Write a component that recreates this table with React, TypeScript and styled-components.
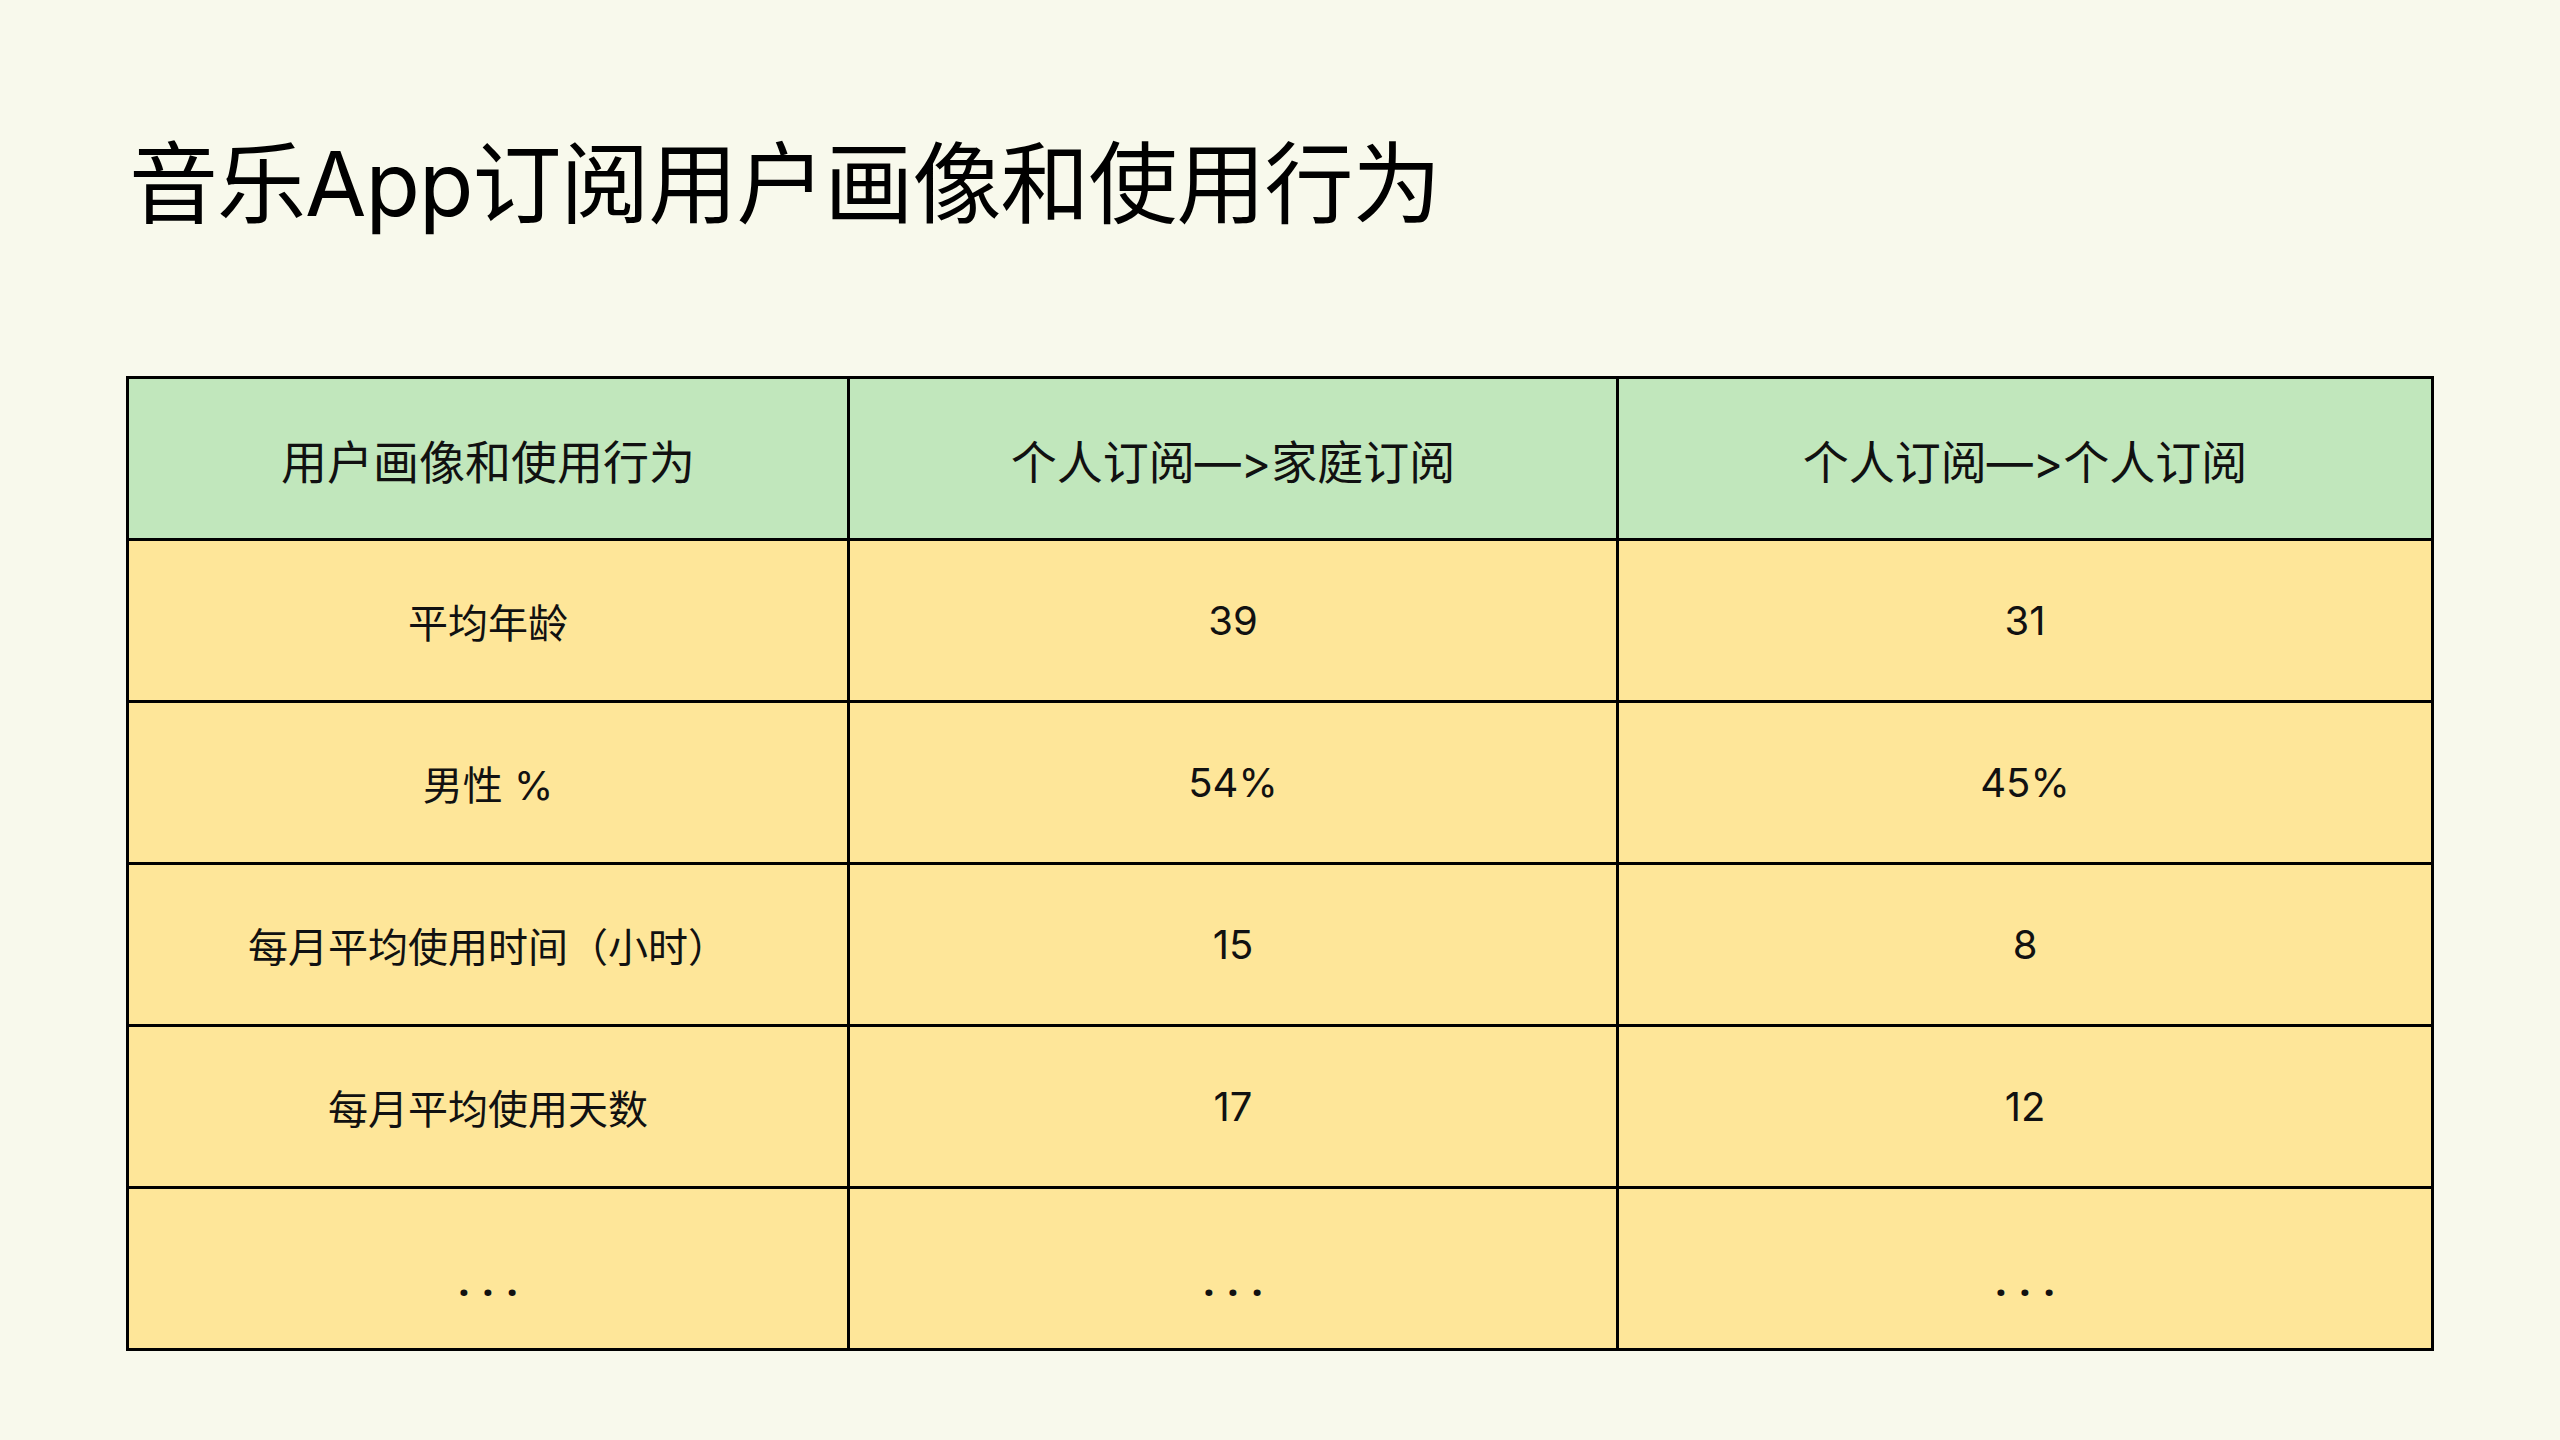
import styled, { createGlobalStyle } from "styled-components";

const GlobalStyle = createGlobalStyle`
  html, body {
    margin: 0;
    padding: 0;
    background: #f8f9ec;
  }
  body {
    font-family: Inter, "Noto Sans CJK SC", sans-serif;
    font-feature-settings: "calt" 0, "liga" 0;
    font-variant-ligatures: none;
    color: #111;
  }
`;

interface Row {
  label: string;
  family: string;
  single: string;
}

const rows: Row[] = [
  { label: "平均年龄", family: "39", single: "31" },
  { label: "男性 %", family: "54%", single: "45%" },
  { label: "每月平均使用时间（小时）", family: "15", single: "8" },
  { label: "每月平均使用天数", family: "17", single: "12" },
];

const headers = ["用户画像和使用行为", "个人订阅—>家庭订阅", "个人订阅—>个人订阅"];

export default function App() {
  return (
    <Page>
      <GlobalStyle />
      <Title>音乐App订阅用户画像和使用行为</Title>
      <Table>
        {headers.map((h) => (
          <HeadCell key={h}>{h}</HeadCell>
        ))}
        {rows.flatMap((r) => [
          <Cell key={r.label + "-l"}>{r.label}</Cell>,
          <Cell key={r.label + "-f"}>{r.family}</Cell>,
          <Cell key={r.label + "-s"}>{r.single}</Cell>,
        ])}
        {[0, 1, 2].map((i) => (
          <Cell key={"more" + i}>
            <Dots>...</Dots>
          </Cell>
        ))}
      </Table>
    </Page>
  );
}

const Page = styled.div`
  width: 2560px;
  height: 1440px;
  box-sizing: border-box;
  padding: 138px 126px 0;
`;

const Title = styled.h1`
  margin: 0 0 146px 3px;
  font-size: 89px;
  line-height: 92px;
  font-weight: 400;
  color: #000;
  letter-spacing: -1px;
`;

const Table = styled.div`
  box-sizing: border-box;
  width: 2308px;
  display: grid;
  grid-template-columns: 718px 766px 812px;
  grid-auto-rows: 159px;
  gap: 3px;
  border: 3px solid #000;
  background: #000;
`;

const Cell = styled.div`
  display: flex;
  align-items: center;
  justify-content: center;
  background: #fee699;
  font-size: 40px;
  color: #111;
`;

const HeadCell = styled(Cell)`
  background: #c1e7bc;
  font-size: 46px;
`;

const Dots = styled.span`
  font-family: "Noto Sans", sans-serif;
  font-weight: 700;
  font-size: 40px;
  letter-spacing: 13px;
  padding-left: 13px;
  transform: translateY(12px);
`;
